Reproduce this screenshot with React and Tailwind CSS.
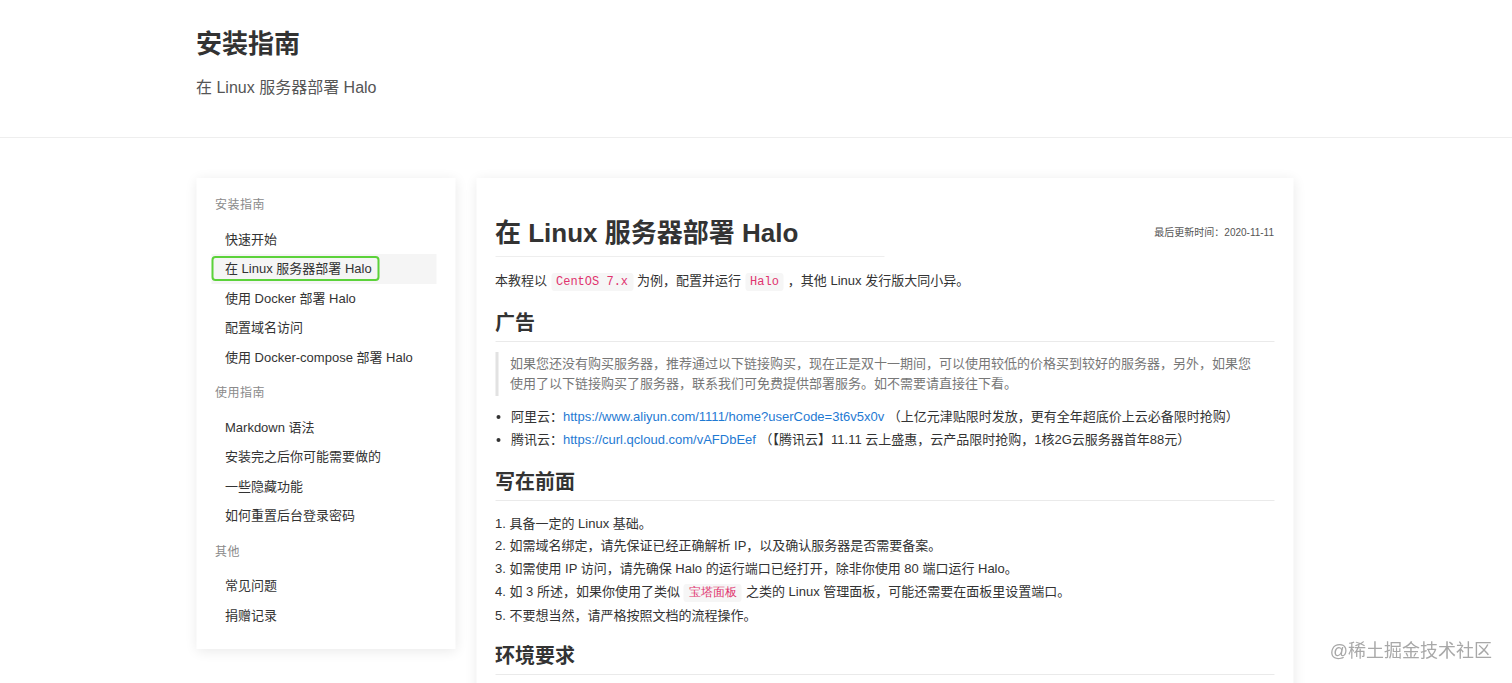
import React from "react";

const font = {
  fontFamily: '"Liberation Sans", "Noto Sans CJK SC", sans-serif',
};

const groups = [
  {
    title: "安装指南",
    items: ["快速开始", "在 Linux 服务器部署 Halo", "使用 Docker 部署 Halo", "配置域名访问", "使用 Docker-compose 部署 Halo"],
  },
  {
    title: "使用指南",
    items: ["Markdown 语法", "安装完之后你可能需要做的", "一些隐藏功能", "如何重置后台登录密码"],
  },
  { title: "其他", items: ["常见问题", "捐赠记录"] },
];

function Code({ children }) {
  return (
    <code className="mx-[4px] rounded-[3px] bg-[#f6f6f6] px-[5px] py-[2px] font-['Liberation_Mono',monospace] text-[12px] text-[#e0336e]">
      {children}
    </code>
  );
}

function Sidebar() {
  return (
    <aside className="w-[259px] shrink-0 self-start bg-white pt-[17px] pb-[19px] shadow-[0_2px_12px_rgba(0,0,0,0.09)]">
      {groups.map((g, gi) => (
        <div key={g.title} className={gi > 0 ? "mt-[11px]" : ""}>
          <div className="pl-[19px] text-[12px] leading-[20px] tracking-[0.5px] text-[#8a8a8a]">{g.title}</div>
          <ul className="mt-[9.5px] ml-[15px] mr-[19px]">
            {g.items.map((item) =>
              item === "在 Linux 服务器部署 Halo" ? (
                <li key={item} className="flex h-[29.5px] items-center bg-[#f5f5f5] text-[13px] text-[#333]">
                  <span className="h-[25px] rounded-[4px] border-2 border-[#5cd23a] pl-[12px] pr-[6px] leading-[21px]">
                    {item}
                  </span>
                </li>
              ) : (
                <li key={item} className="pl-[14px] text-[13px] leading-[29.5px] text-[#333]">
                  {item}
                </li>
              )
            )}
          </ul>
        </div>
      ))}
    </aside>
  );
}

function H2({ children, className = "" }) {
  return (
    <h2 className={`border-b border-[#eaeaea] pb-[4px] text-[20px] font-semibold leading-[28px] text-[#333] ${className}`}>
      {children}
    </h2>
  );
}

function Article() {
  return (
    <main className="min-h-[560px] flex-1 bg-white px-[19px] pt-[37px] pb-[40px] text-[13px] text-[#333] shadow-[0_2px_12px_rgba(0,0,0,0.09)]">
      <div className="flex items-start justify-between">
        <h1 className="w-1/2 border-b border-[#eeeeee] pb-[5px] text-[26px] font-semibold leading-[36px] text-[#333]">
          在 Linux 服务器部署 Halo
        </h1>
        <span className="text-[10px] leading-[36px] text-[#555]">最后更新时间：2020-11-11</span>
      </div>

      <p className="mt-[12px] leading-[23px]">
        本教程以<Code>CentOS 7.x</Code>为例，配置并运行<Code>Halo</Code>，其他 Linux 发行版大同小异。
      </p>

      <H2 className="mt-[14.5px]">广告</H2>

      <blockquote className="mt-[10px] border-l-[3px] border-[#e2e2e2] py-[2px] pl-[12px] pr-[16px] leading-[20px] text-[#777]">
        如果您还没有购买服务器，推荐通过以下链接购买，现在正是双十一期间，可以使用较低的价格买到较好的服务器，另外，如果您使用了以下链接购买了服务器，联系我们可免费提供部署服务。如不需要请直接往下看。
      </blockquote>

      <ul className="mt-[9px] list-disc pl-[16px] leading-[23px]">
        <li>
          阿里云：<a className="text-[#1f7ad3]">https://www.aliyun.com/1111/home?userCode=3t6v5x0v</a>
          {" "}（上亿元津贴限时发放，更有全年超底价上云必备限时抢购）
        </li>
        <li>
          腾讯云：<a className="text-[#1f7ad3]">https://curl.qcloud.com/vAFDbEef</a>
          {" "}（【腾讯云】11.11 云上盛惠，云产品限时抢购，1核2G云服务器首年88元）
        </li>
      </ul>

      <H2 className="mt-[17px]">写在前面</H2>

      <ol className="mt-[12px] list-inside list-decimal leading-[22.8px]">
        <li>具备一定的 Linux 基础。</li>
        <li>如需域名绑定，请先保证已经正确解析 IP，以及确认服务器是否需要备案。</li>
        <li>如需使用 IP 访问，请先确保 Halo 的运行端口已经打开，除非你使用 80 端口运行 Halo。</li>
        <li>
          如 3 所述，如果你使用了类似
          <code className="mx-[4px] rounded-[3px] bg-[#f6f6f6] px-[5px] py-[2px] text-[12px] text-[#e0336e]">宝塔面板</code>
          之类的 Linux 管理面板，可能还需要在面板里设置端口。
        </li>
        <li>不要想当然，请严格按照文档的流程操作。</li>
      </ol>

      <H2 className="mt-[15px]">环境要求</H2>
    </main>
  );
}

export default function App() {
  return (
    <div className="relative min-h-screen overflow-hidden bg-white" style={font}>
      <header className="border-b border-[#eeeeee] pt-[27px] pb-[37px]">
        <div className="mx-auto w-[1097px] -translate-x-[11.5px]">
          <h1 className="text-[26px] font-bold leading-[34px] text-[#333]">安装指南</h1>
          <p className="mt-[15px] text-[16px] leading-[24px] text-[#555]">在 Linux 服务器部署 Halo</p>
        </div>
      </header>

      <div className="mx-auto mt-[40px] flex w-[1097px] -translate-x-[11.5px] gap-[21px] pb-[40px]">
        <Sidebar />
        <Article />
      </div>

      {/* 水印 */}
      <div className="fixed right-[20px] bottom-[20px] text-[18px] leading-[24px] text-[#a8a8a8]">@稀土掘金技术社区</div>
    </div>
  );
}
